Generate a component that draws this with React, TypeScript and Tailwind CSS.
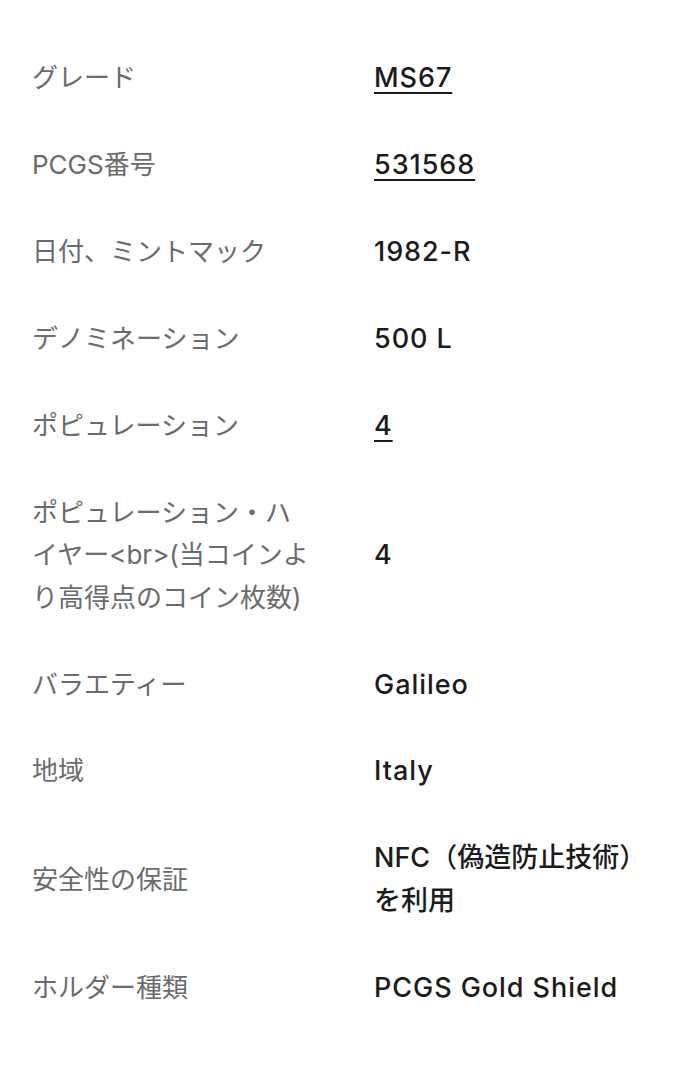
import React from 'react';

type Row = {
  label: string;
  value: string;
  link?: boolean;
  latin?: boolean;
};

const rows: Row[] = [
  { label: 'グレード', value: 'MS67', link: true, latin: true },
  { label: 'PCGS番号', value: '531568', link: true, latin: true },
  { label: '日付、ミントマック', value: '1982-R', latin: true },
  { label: 'デノミネーション', value: '500 L', latin: true },
  { label: 'ポピュレーション', value: '4', link: true, latin: true },
  { label: 'ポピュレーション・ハイヤー<br>(当コインより高得点のコイン枚数)', value: '4', latin: true },
  { label: 'バラエティー', value: 'Galileo', latin: true },
  { label: '地域', value: 'Italy', latin: true },
  { label: '安全性の保証', value: 'NFC（偽造防止技術）を利用' },
  { label: 'ホルダー種類', value: 'PCGS Gold Shield', latin: true },
];

const App: React.FC = () => {
  return (
    <div
      className="min-h-screen bg-white pt-[35px] pl-8 pr-8 text-[26px] leading-[42.4px]"
      style={{ fontFamily: 'Inter, "Noto Sans CJK JP", sans-serif' }}
    >
      {rows.map((row) => (
        <div key={row.label} className="grid grid-cols-[342px_1fr] items-center py-[22.25px]">
          <div className="pr-[64px] text-[#6b6b6b] break-all">{row.label}</div>
          <div
            className={`text-[27px] text-[#1c1c1c] font-medium ${row.latin ? 'tracking-[0.035em]' : ''}`}
          >
            {row.link ? (
              <span className="underline decoration-2 underline-offset-[5px]">{row.value}</span>
            ) : (
              row.value
            )}
          </div>
        </div>
      ))}
    </div>
  );
};

export default App;
